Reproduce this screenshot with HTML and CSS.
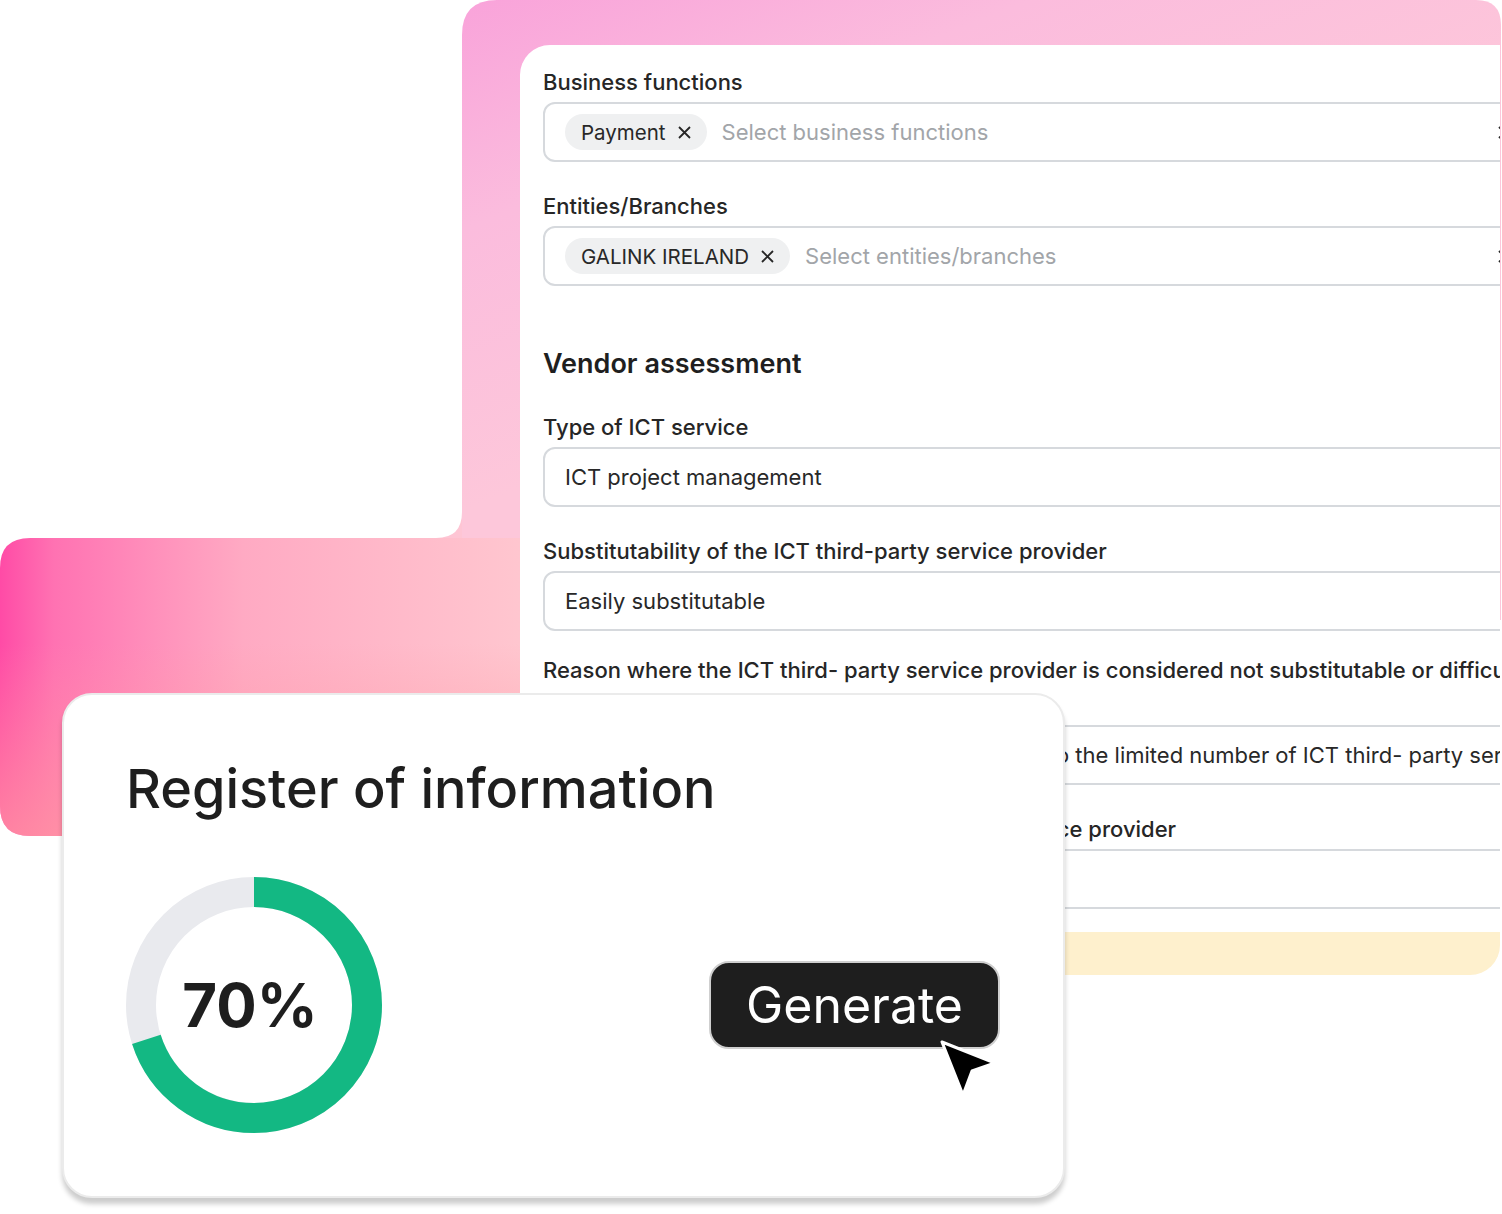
FILE: index.html
```html
<!DOCTYPE html>
<html>
<head>
  <meta charset="UTF-8">
  <title>Register of information</title>
  <link rel="stylesheet" href="styles.css">
</head>
<body>
  <div class="stage">
    <!-- pink backdrop behind both cards -->
    <svg class="backdrop" width="1502" height="840" viewBox="0 0 1502 840">
      <defs>
        <linearGradient id="g-top" gradientUnits="userSpaceOnUse" x1="462" y1="0" x2="640" y2="440">
          <stop offset="0" stop-color="#f9a3da"/>
          <stop offset="0.45" stop-color="#fbbcdd"/>
          <stop offset="1" stop-color="#fdc7da"/>
        </linearGradient>
        <linearGradient id="g-bottom" gradientUnits="userSpaceOnUse" x1="0" y1="0" x2="540" y2="0">
          <stop offset="0" stop-color="#ff4ba6"/>
          <stop offset="0.1" stop-color="#ff72b2"/>
          <stop offset="0.45" stop-color="#ffaac3"/>
          <stop offset="1" stop-color="#ffc8d0"/>
        </linearGradient>
        <linearGradient id="g-warm" gradientUnits="userSpaceOnUse" x1="0" y1="540" x2="0" y2="836">
          <stop offset="0.35" stop-color="#ff9aa0" stop-opacity="0"/>
          <stop offset="1" stop-color="#ff9aa0" stop-opacity="0.7"/>
        </linearGradient>
      </defs>
      <path d="M497 0 H1476 Q1501 0 1501 25 V620 H462 V35 Q462 0 497 0 Z" fill="url(#g-top)"/>
      <path d="M30 538 H560 V836 H30 Q0 836 0 806 V568 Q0 538 30 538 Z" fill="url(#g-bottom)"/>
      <path d="M30 538 H560 V836 H30 Q0 836 0 806 V568 Q0 538 30 538 Z" fill="url(#g-warm)"/>
      <path d="M436 538 Q462 538 462 512 V538 Z" fill="#fec5d4"/>
    </svg>

    <div class="form-card">
      <div class="field">
        <div class="field-label">Business functions</div>
        <div class="select">
          <span class="tag">Payment
            <svg class="tag-x" width="15" height="15" viewBox="0 0 15 15"><path d="M2 2 L13 13 M13 2 L2 13"/></svg>
          </span>
          <span class="placeholder">Select business functions</span>
          <svg class="clear-x" width="15" height="15" viewBox="0 0 15 15"><path d="M2 2 L13 13 M13 2 L2 13"/></svg>
        </div>
      </div>

      <div class="field">
        <div class="field-label">Entities/Branches</div>
        <div class="select">
          <span class="tag">GALINK IRELAND
            <svg class="tag-x" width="15" height="15" viewBox="0 0 15 15"><path d="M2 2 L13 13 M13 2 L2 13"/></svg>
          </span>
          <span class="placeholder">Select entities/branches</span>
          <svg class="clear-x" width="15" height="15" viewBox="0 0 15 15"><path d="M2 2 L13 13 M13 2 L2 13"/></svg>
        </div>
      </div>

      <h2 class="section-title">Vendor assessment</h2>

      <div class="field">
        <div class="field-label">Type of ICT service</div>
        <div class="select">ICT project management</div>
      </div>

      <div class="field">
        <div class="field-label">Substitutability of the ICT third-party service provider</div>
        <div class="select">Easily substitutable</div>
      </div>

      <div class="field field-reason">
        <div class="field-label">Reason where the ICT third- party service provider is considered not substitutable or difficult to be substitutable</div>
        <div class="select">Lack of any real alternatives, even partial, due to the limited number of ICT third- party service providers</div>
      </div>

      <div class="field">
        <div class="field-label">Possibility to reintegrate the contracted ICT service provider</div>
        <div class="select"></div>
      </div>

      <div class="notice"></div>
    </div>

    <div class="register-card">
      <h1 class="register-title">Register of information</h1>
      <div class="register-row">
        <div class="donut">
          <svg width="256" height="256" viewBox="0 0 256 256">
            <circle cx="128" cy="128" r="113" fill="none" stroke="#e9eaee" stroke-width="30"/>
            <circle cx="128" cy="128" r="113" fill="none" stroke="#13b883" stroke-width="30"
                    stroke-dasharray="497 800" transform="rotate(-90 128 128)"/>
          </svg>
          <span class="donut-value">70%</span>
        </div>
        <button class="generate-btn">Generate</button>
      </div>
    </div>

    <svg class="cursor" width="66" height="66" viewBox="0 0 66 66">
      <path d="M6 6 L59 27 L36 35 L27 59 Z" fill="#000" stroke="#fff" stroke-width="3" stroke-linejoin="round"/>
    </svg>
  </div>
</body>
</html>
```

FILE: styles.css
```css
body {
  margin: 0;
  font-family: Inter, "Noto Sans", sans-serif;
  background: #fff;
  overflow: hidden;
}

.stage {
  position: relative;
  width: 1502px;
  height: 1214px;
  overflow: hidden;
}

.backdrop {
  position: absolute;
  left: 0;
  top: 0;
}

/* Vendor form card */
.form-card {
  position: absolute;
  left: 520px;
  top: 45px;
  width: 980px;
  box-sizing: border-box;
  padding: 25px 0 0 23px;
  background: #fff;
  border-radius: 30px 0 30px 30px;
  overflow: hidden;
}

.field + .field {
  margin-top: 32px;
}

.field-label {
  font-size: 22px;
  line-height: 24px;
  font-weight: 500;
  color: #262626;
  margin-bottom: 8px;
  white-space: nowrap;
}

.select {
  height: 60px;
  box-sizing: border-box;
  margin-right: -40px;
  padding: 0 26px 0 20px;
  border: 2px solid #d6d9dd;
  border-radius: 12px;
  display: flex;
  align-items: center;
  gap: 15px;
  font-size: 22px;
  color: #282828;
  white-space: nowrap;
  overflow: hidden;
}

.tag {
  display: inline-flex;
  align-items: center;
  gap: 11px;
  height: 36px;
  padding: 0 15px 0 16px;
  border-radius: 18px;
  background: #eff0f1;
  font-size: 20.5px;
  flex-shrink: 0;
}

.tag-x path,
.clear-x path {
  stroke: #262626;
  stroke-width: 1.8;
  fill: none;
}

.placeholder {
  color: #a2a5a9;
}

.clear-x {
  margin-left: auto;
  flex-shrink: 0;
}

.section-title {
  margin: 62px 0 35px;
  font-size: 27px;
  line-height: 32px;
  font-weight: 600;
  color: #1f1f1f;
}

.field + .field-reason {
  margin-top: 27px;
}

.field-reason .field-label {
  margin-bottom: 43px;
}

.notice {
  margin: 23px 0 0 -23px;
  height: 43px;
  background: #fef0cd;
}

/* Register card */
.register-card {
  position: absolute;
  left: 62px;
  top: 693px;
  width: 1003px;
  box-sizing: border-box;
  padding: 60px 63px 63px 62px;
  background: #fff;
  border: 2px solid #ebebeb;
  border-radius: 30px;
  box-shadow: 0 6px 5px rgba(0, 0, 0, 0.2);
}

.register-title {
  margin: 0;
  font-size: 54px;
  line-height: 68px;
  font-weight: 500;
  color: #1e1e1e;
}

.register-row {
  margin-top: 54px;
  display: flex;
  align-items: center;
  justify-content: space-between;
}

.donut {
  display: grid;
  place-items: center;
  width: 256px;
  height: 256px;
}

.donut svg,
.donut-value {
  grid-area: 1 / 1;
}

.donut-value {
  font-size: 60px;
  font-weight: 700;
  color: #1e1e1e;
  margin-right: 8px;
}

.generate-btn {
  height: 88px;
  padding: 0 35px;
  font-family: inherit;
  font-size: 50px;
  font-weight: 400;
  color: #fff;
  background: #1e1e1e;
  border: 2px solid #cfcfcf;
  border-radius: 20px;
}

.cursor {
  position: absolute;
  left: 936px;
  top: 1036px;
}
```
